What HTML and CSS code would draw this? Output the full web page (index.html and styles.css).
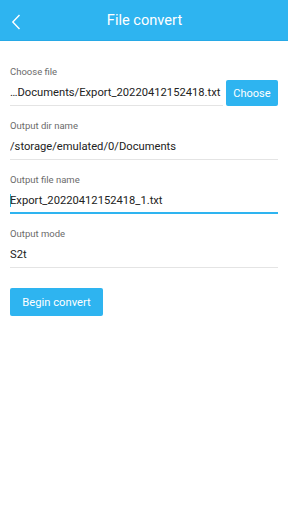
FILE: index.html
```html
<!DOCTYPE html>
<html lang="en">
<head>
  <meta charset="UTF-8">
  <meta name="viewport" content="width=device-width, initial-scale=1.0">
  <title>File convert</title>
  <link rel="stylesheet" href="styles.css">
</head>
<body>
  <!-- Top bar -->
  <div class="topbar">
    <div class="back">
      <svg width="10" height="16" viewBox="0 0 10 16">
        <path d="M8.5 1 L1.8 8 L8.5 15" fill="none" stroke="#fff" stroke-width="1.4"/>
      </svg>
    </div>
    <div class="title">File convert</div>
  </div>

  <div class="content">
    <div class="field">
      <div class="label">Choose file</div>
      <div class="row">
        <div class="value underline">…Documents/Export_20220412152418.txt</div>
        <button class="btn small">Choose</button>
      </div>
    </div>

    <div class="field">
      <div class="label">Output dir name</div>
      <div class="value underline">/storage/emulated/0/Documents</div>
    </div>

    <div class="field">
      <div class="label">Output file name</div>
      <div class="value underline focused"><span class="caret"></span>Export_20220412152418_1.txt</div>
    </div>

    <div class="field">
      <div class="label">Output mode</div>
      <div class="value underline">S2t</div>
    </div>

    <button class="btn big">Begin convert</button>
  </div>
</body>
</html>
```

FILE: styles.css
```css
body {
  margin: 0;
  font-family: Roboto, 'Noto Sans', sans-serif;
  background-color: #fff;
  color: #222;
}

/* Top bar */
.topbar {
  height: 40px;
  background-color: #2eb4f0;
  border-bottom: 1px solid #27a9e6;
  display: flex;
  align-items: center;
  justify-content: center;
  position: relative;
}

.back {
  position: absolute;
  left: 11px;
  top: 14px;
}

.title {
  color: #fff;
  font-size: 14.6px;
  margin-left: 1px;
}

/* Form */
.content {
  padding: 24px 10px 0 10px;
}

.field {
  margin-bottom: 13px;
}

.label {
  font-size: 9.5px;
  line-height: 14px;
  color: #6b6b6b;
  margin-bottom: 1px;
}

.row {
  display: flex;
  align-items: stretch;
}

.row .value {
  flex: 1;
  min-width: 0;
  margin-right: 3px;
}

.value {
  font-size: 11.2px;
  height: 25px;
  line-height: 25px;
  white-space: nowrap;
  overflow: hidden;
}

.underline {
  border-bottom: 1px solid #e4e4e4;
}

.underline.focused {
  border-bottom: 2px solid #2eb4f0;
  height: 24px;
}

.caret {
  display: inline-block;
  width: 1px;
  height: 13px;
  background-color: #2eb4f0;
  vertical-align: -3px;
  margin-right: -1px;
}

.btn {
  font-family: Roboto, 'Noto Sans', sans-serif;
  background-color: #2eb4f0;
  color: #fff;
  border: none;
  border-radius: 2px;
  padding: 0;
  cursor: pointer;
}

.btn.small {
  flex-shrink: 0;
  width: 52px;
  height: 26px;
  font-size: 11px;
}

.btn.big {
  margin-top: 7px;
  width: 93px;
  height: 28px;
  font-size: 11.2px;
}
```
